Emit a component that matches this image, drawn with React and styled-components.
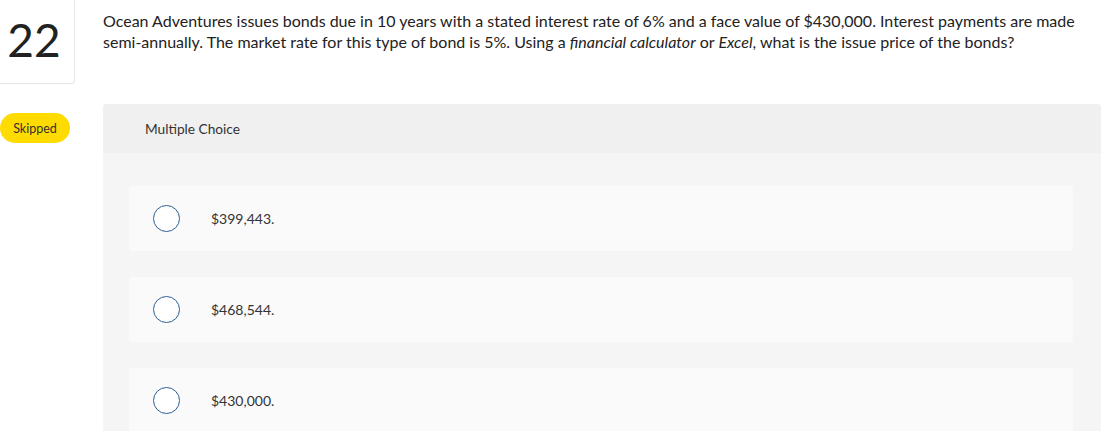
import React from 'react'
import styled, { createGlobalStyle } from 'styled-components';

const Global = createGlobalStyle`
    body {
        margin: 0;
        background: #fff;
        font-family: Lato, "Open Sans", sans-serif;
        color: #222;
    }
`;

const Page = styled.div`
    display: flex;
    align-items: flex-start;
    width: 1103px;
    height: 431px;
    overflow: hidden;
`;

const Side = styled.div`
    width: 75px;
    flex-shrink: 0;
    display: flex;
    flex-direction: column;
`;

const NumberBox = styled.div`
    height: 84px;
    box-sizing: border-box;
    border-right: 1px solid #e6e6e6;
    border-bottom: 1px solid #e6e6e6;
    border-bottom-right-radius: 4px;
    display: flex;
    align-items: center;
    justify-content: center;
    font-size: 46px;
    font-weight: 400;
    color: #222;
    padding-right: 6px;
    padding-bottom: 4px;
`;

const Badge = styled.span`
    margin-top: 29px;
    width: 70px;
    height: 30px;
    border-radius: 15px;
    background: #ffdb00;
    display: flex;
    align-items: center;
    justify-content: center;
    font-size: 12.5px;
    color: #333;
`;

const Main = styled.div`
    flex: 1;
    padding-left: 28px;
    padding-top: 10px;
`;

const Question = styled.p`
    margin: 0;
    font-size: 16px;
    line-height: 21px;
    color: #222;
    padding-right: 20px;
    em { font-style: italic; }
`;

const NoWrap = styled.span`
    white-space: nowrap;
`;

const Panel = styled.div`
    margin-top: 52px;
    margin-right: 2px;
    background: #f5f5f5;
    border-top-right-radius: 4px;
    border-top-left-radius: 4px;
    overflow: hidden;
`;

const PanelHeader = styled.div`
    height: 49px;
    background: #f0f0f0;
    display: flex;
    align-items: center;
    padding-left: 42px;
    font-size: 13.7px;
    color: #333;
`;

const Options = styled.div`
    display: flex;
    flex-direction: column;
    gap: 26px;
    padding: 33px 28px 0 26px;
`;

const Option = styled.label`
    height: 65px;
    background: #fafafa;
    border-radius: 3px;
    display: flex;
    align-items: center;
    padding-left: 24px;
    cursor: pointer;
`;

const Radio = styled.span`
    width: 25px;
    height: 25px;
    border-radius: 50%;
    border: 1.5px solid #2c5f93;
    background: #fff;
    flex-shrink: 0;
`;

const OptionText = styled.span`
    margin-left: 31px;
    font-size: 14px;
    color: #333;
`;

const choices = ['$399,443.', '$468,544.', '$430,000.'];

const App = () => {
    return (
        <>
            <Global />
            <Page>
                <Side>
                    <NumberBox>22</NumberBox>
                    <Badge>Skipped</Badge>
                </Side>
                <Main>
                    <Question>
                        Ocean Adventures issues bonds due in 10 years with a stated interest rate of 6% and a face value of $430,000. Interest payments are made <NoWrap>semi-annually.</NoWrap> The market rate for this type of bond is 5%. Using a <em>financial calculator</em> or <em>Excel</em>, what is the issue price of the bonds?
                    </Question>
                    <Panel>
                        <PanelHeader>Multiple Choice</PanelHeader>
                        <Options>
                            {choices.map(c => (
                                <Option key={c}>
                                    <Radio />
                                    <OptionText>{c}</OptionText>
                                </Option>
                            ))}
                        </Options>
                    </Panel>
                </Main>
            </Page>
        </>
    )
}

export default App;
